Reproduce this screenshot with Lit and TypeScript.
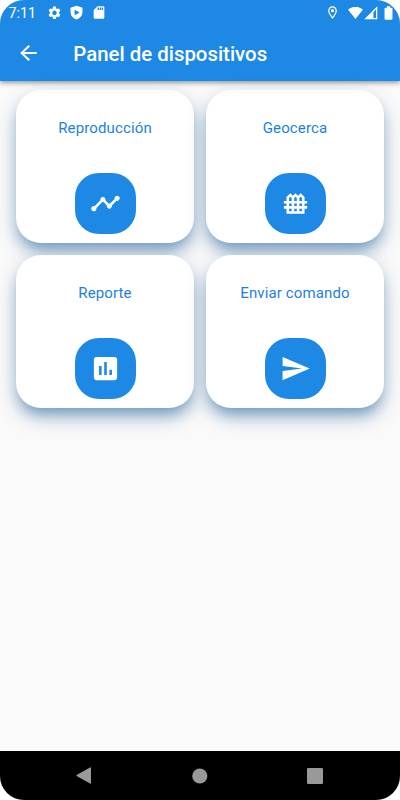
import { LitElement, html, css, svg } from "lit";
import { customElement, property } from "lit/decorators.js";

const ICONS: Record<string, string> = {
  timeline:
    "M23 8c0 1.1-.9 2-2 2-.18 0-.35-.02-.51-.07l-3.56 3.55c.05.16.07.34.07.52 0 1.1-.9 2-2 2s-2-.9-2-2c0-.18.02-.36.07-.52l-2.55-2.55c-.16.05-.34.07-.52.07s-.36-.02-.52-.07l-4.55 4.56c.05.16.07.33.07.51 0 1.1-.9 2-2 2s-2-.9-2-2 .9-2 2-2c.18 0 .35.02.51.07l4.56-4.55C8.02 9.36 8 9.18 8 9c0-1.1.9-2 2-2s2 .9 2 2c0 .18-.02.36-.07.52l2.55 2.55c.16-.05.34-.07.52-.07s.36.02.52.07l3.55-3.56C19.02 8.35 19 8.18 19 8c0-1.1.9-2 2-2s2 .9 2 2z",
  fence:
    "M21 12v-2h-2V7l-3-3-2 2-2-2-2 2-2-2-3 3v3H3v2h2v2H3v2h2v4h14v-4h2v-2h-2v-2h2zM16 6.83l1 1V10h-2V7.83l.41-.41.59-.59zM12 6.83l.59.59.41.41V10h-2V7.83l.41-.41.59-.59zM11 14v-2h2v2h-2zM13 16v2h-2v-2h2zM7 7.83l1-1 .59.59.41.41V10H7V7.83zM7 12h2v2H7v-2zM7 16h2v2H7v-2zM17 18h-2v-2h2v2zM17 14h-2v-2h2v2z",
  report:
    "M19 3H5c-1.1 0-2 .9-2 2v14c0 1.1.9 2 2 2h14c1.1 0 2-.9 2-2V5c0-1.1-.9-2-2-2zM9 17H7v-7h2v7zM13 17h-2V7h2v10zM17 17h-2v-4h2v4z",
  send: "M2.01 21L23 12 2.01 3 2 10l15 2-15 2z",
  back: "M20 11H7.83l5.59-5.59L12 4l-8 8 8 8 1.41-1.41L7.83 13H20v-2z",
  gear:
    "M19.14 12.94c.04-.3.06-.61.06-.94 0-.32-.02-.64-.07-.94l2.03-1.58c.18-.14.23-.41.12-.61l-1.92-3.32c-.12-.22-.37-.29-.59-.22l-2.39.96c-.5-.38-1.03-.7-1.62-.94l-.36-2.54c-.04-.24-.24-.41-.48-.41h-3.84c-.24 0-.43.17-.47.41l-.36 2.54c-.59.24-1.13.57-1.62.94l-2.39-.96c-.22-.08-.47 0-.59.22L2.74 8.87c-.12.21-.08.47.12.61l2.03 1.58c-.05.3-.09.63-.09.94s.02.64.07.94l-2.03 1.58c-.18.14-.23.41-.12.61l1.92 3.32c.12.22.37.29.59.22l2.39-.96c.5.38 1.03.7 1.62.94l.36 2.54c.05.24.24.41.48.41h3.84c.24 0 .44-.17.47-.41l.36-2.54c.59-.24 1.13-.56 1.62-.94l2.39.96c.22.08.47 0 .59-.22l1.92-3.32c.12-.22.07-.47-.12-.61l-2.01-1.58zM12 15.6c-1.98 0-3.6-1.62-3.6-3.6s1.62-3.6 3.6-3.6 3.6 1.62 3.6 3.6-1.62 3.6-3.6 3.6z",
  shield: "M12 1L2.5 4.5V11c0 5.5 4 10.5 9.5 12 5.5-1.5 9.5-6.5 9.5-12V4.5L12 1zM9 7.5l8 4.5-8 4.5z",
  sd: "M18 2h-8L4.02 8 4 20c0 1.1.9 2 2 2h12c1.1 0 2-.9 2-2V4c0-1.1-.9-2-2-2zM12 8h-2V4h2v4zM15 8h-2V4h2v4zM18 8h-2V4h2v4z",
  place:
    "M12 2C8.13 2 5 5.13 5 9c0 5.25 7 13 7 13s7-7.75 7-13c0-3.87-3.13-7-7-7zM7 9c0-2.76 2.24-5 5-5s5 2.24 5 5c0 2.88-2.88 7.19-5 9.88C9.92 16.21 7 11.85 7 9zM12 6.5a2.5 2.5 0 1 0 0 5 2.5 2.5 0 1 0 0-5z",
  wifi: "M12 21.5L24 7C23.5 6.6 19 3 12 3S.5 6.6 0 7l12 14.5z",
  signal: "M2 22H22V2zM16 11.5L20 6.5V20H16z",
  battery: "M15.67 4H14V2h-4v2H8.33C7.6 4 7 4.6 7 5.33v15.33C7 21.4 7.6 22 8.33 22h7.33c.74 0 1.34-.6 1.34-1.33V5.33C17 4.6 16.4 4 15.67 4z",
};

@customElement("app-icon")
class AppIcon extends LitElement {
  @property() name = "";
  static styles = css`
    :host { display: block; flex: none; }
    svg { display: block; width: 100%; height: 100%; fill: currentColor; overflow: visible; }
  `;
  render() {
    return html`<svg viewBox="0 0 24 24" preserveAspectRatio="none" aria-hidden="true">
      ${svg`<path fill-rule="evenodd" d=${ICONS[this.name]}></path>`}
    </svg>`;
  }
}

@customElement("device-card")
class DeviceCard extends LitElement {
  @property() label = "";
  @property() icon = "";
  static styles = css`
    :host {
      box-sizing: border-box;
      display: flex;
      flex-direction: column;
      align-items: center;
      justify-content: space-between;
      padding: 28px 0 8.5px;
      border-radius: 25px;
      background: #fff;
      box-shadow: 0 9px 12px -4px rgba(1, 75, 140, 0.3),
        0 10px 20px -1px rgba(1, 75, 140, 0.34),
        0 2px 20px 1px rgba(1, 75, 140, 0.04);
    }
    .label { font-size: 15px; line-height: 21px; letter-spacing: 0.13px; color: #1e7fe0; white-space: nowrap; }
    .button {
      display: grid;
      place-items: center;
      width: 61px;
      height: 61px;
      border-radius: 24px;
      background: #1e88e5;
      color: #fff;
    }
    .glyph { width: 31px; height: 31px; }
  `;
  render() {
    return html`<span class="label">${this.label}</span>
      <div class="button"><app-icon class="glyph" name=${this.icon}></app-icon></div>`;
  }
}

@customElement("app-root")
class AppRoot extends LitElement {
  static styles = css`
    :host { display: block; background: #fff; font-family: Roboto, sans-serif; }
    .phone {
      display: flex;
      flex-direction: column;
      height: 800px;
      width: 400px;
      overflow: hidden;
      border-radius: 24px;
      background: #fafafa;
    }
    .top {
      flex: none;
      height: 81.3px;
      background: #1e88e5;
      color: #fff;
      box-shadow: 0 2px 4px rgba(0, 0, 0, 0.3), 0 1px 8px rgba(0, 0, 0, 0.12);
    }
    .status { display: flex; align-items: center; height: 25px; padding: 0 2.5px 0 8.5px; }
    .clock { width: 38px; padding-top: 1px; font-size: 14.2px; line-height: 25px; }
    .gear { width: 15px; height: 15.5px; }
    .shield { width: 15px; height: 15px; margin-left: 7.5px; }
    .sd { width: 16px; height: 15px; margin-left: 7px; }
    .place { width: 15px; height: 15px; margin-left: auto; }
    .wifi { width: 15px; height: 15.5px; margin-left: 7.5px; }
    .signal { width: 15.6px; height: 15.6px; }
    .battery { width: 19px; height: 16px; }
    .bar { display: flex; align-items: center; height: 56px; padding-left: 16px; }
    .back { width: 25px; height: 24px; }
    .title { margin: 1px 0 0 32.3px; font-size: 20.4px; font-weight: 500; line-height: 28px; white-space: nowrap; }
    .grid {
      flex: 1;
      display: grid;
      grid-template-columns: 178px 178px;
      grid-auto-rows: 153px;
      gap: 12px;
      align-content: start;
      padding: 8.3px 16px;
    }
    .nav {
      flex: none;
      display: flex;
      align-items: center;
      justify-content: space-between;
      box-sizing: border-box;
      height: 49px;
      padding: 0 77px 0 76px;
      background: #000;
      color: #999;
    }
    .nav svg { display: block; fill: currentColor; overflow: visible; }
  `;
  render() {
    const cards = [
      ["Reproducción", "timeline"],
      ["Geocerca", "fence"],
      ["Reporte", "report"],
      ["Enviar comando", "send"],
    ];
    return html`<div class="phone">
      <header class="top">
        <div class="status">
          <span class="clock">7:11</span>
          ${["gear", "shield", "sd", "place", "wifi", "signal", "battery"].map(
            (n) => html`<app-icon class=${n} name=${n}></app-icon>`
          )}
        </div>
        <div class="bar">
          <app-icon class="back" name="back"></app-icon>
          <h1 class="title">Panel de dispositivos</h1>
        </div>
      </header>
      <main class="grid">
        ${cards.map(([label, icon]) => html`<device-card label=${label} icon=${icon}></device-card>`)}
      </main>
      <nav class="nav">
        <svg width="15" height="17"><path d="M14 0.4Q15 0 15 1V16Q15 17 14 16.5L0.6 9Q0 8.5 0.6 8z"></path></svg>
        <svg width="16" height="16"><circle cx="8.8" cy="8" r="7.6"></circle></svg>
        <svg width="16" height="16"><rect width="16" height="16" rx="1.3"></rect></svg>
      </nav>
    </div>`;
  }
}
